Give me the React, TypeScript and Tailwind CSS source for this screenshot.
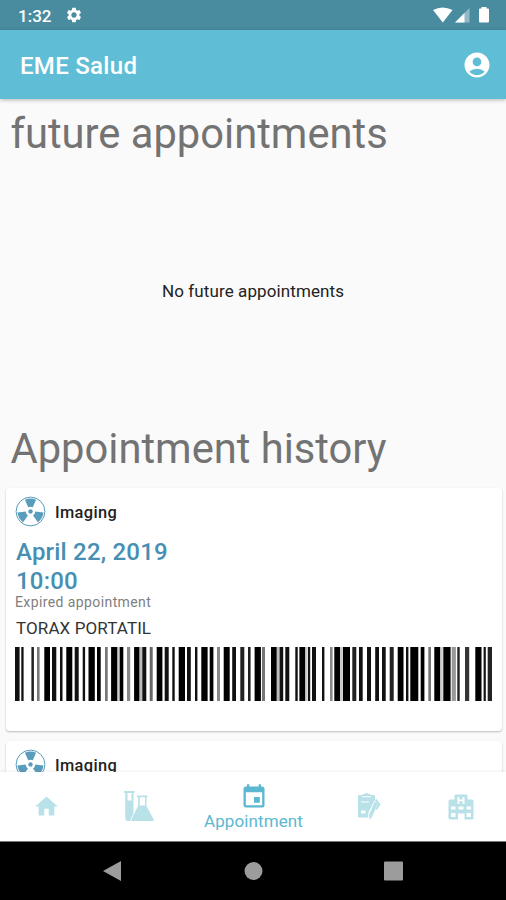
import type { ReactNode } from "react";
import { MdAccountCircle, MdEvent, MdHome, MdSettings } from "react-icons/md";

// Bars as [start, width, shade], in pixels from the left edge of the code.
const BARS: [number, number, string][] = [
  [0, 4.6, "#111"], [6.3, 2.3, "#111"], [16.4, 2.5, "#222"], [22, 2.6, "#777"],
  [29.3, 5.7, "#000"], [37, 4.3, "#111"], [45, 2.5, "#111"], [51.3, 6, "#000"],
  [59.7, 4, "#111"], [67.7, 2.4, "#111"], [73.5, 6.3, "#000"], [82, 3.7, "#000"],
  [90, 2.7, "#777"], [96.1, 6.4, "#000"], [102.5, 2.2, "#ccc"], [104.7, 3.6, "#000"],
  [112, 3.2, "#888"], [119.1, 5.5, "#000"], [124.6, 2.7, "#bbb"], [127.3, 4, "#111"],
  [134.7, 3, "#666"], [141.7, 5.7, "#000"], [149.7, 4, "#111"], [157.3, 2.4, "#111"],
  [163.7, 6.3, "#000"], [172, 3.8, "#111"], [180, 2.4, "#111"], [186.3, 6.3, "#000"],
  [194.7, 3.7, "#000"], [202, 3, "#888"], [208.7, 6, "#000"], [217.2, 3.8, "#111"],
  [225.3, 4, "#222"], [233, 2.6, "#222"], [239.6, 6.3, "#000"], [247, 3, "#777"],
  [256, 5.8, "#000"], [261.8, 2.8, "#bbb"], [264.6, 3.6, "#111"], [270.3, 4, "#111"],
  [280.3, 2.4, "#111"], [284.4, 6, "#000"], [290.4, 2.3, "#ccc"], [293, 2.2, "#111"],
  [297, 4, "#111"], [307, 2.4, "#111"], [315, 2.6, "#888"], [319.3, 5.8, "#000"],
  [325.1, 2.8, "#ccc"], [328, 7, "#000"], [337.3, 4, "#222"], [344, 3.7, "#111"],
  [352, 4, "#111"], [360.2, 3.8, "#111"], [367, 3.7, "#111"], [374.7, 4, "#222"],
  [382.7, 5.8, "#000"], [391, 2.4, "#111"], [395.3, 8, "#000"], [405.7, 3.7, "#000"],
  [413.3, 2.7, "#777"], [419.3, 6, "#000"], [425.5, 2.3, "#ccc"], [428.3, 7.3, "#000"],
  [436.7, 4.2, "#999"], [442.3, 2.4, "#222"], [450, 4.2, "#333"], [460.3, 6.2, "#000"],
  [468.6, 2.2, "#111"], [472.7, 4.3, "#222"],
];

function Barcode() {
  return (
    <svg className="mt-[9px] block h-[54px] w-[478px]" viewBox="0 0 478 54" aria-hidden="true">
      {BARS.map(([x, w, fill]) => (
        <rect key={x} x={x} y="0" width={w} height="54" fill={fill} />
      ))}
    </svg>
  );
}

function RadiationIcon() {
  const blade = "M-5.6 -11.8 Q0 -14.2 5.6 -11.8 L2.3 -4.2 Q0 -5.4 -2.3 -4.2Z";
  return (
    <svg className="block size-[31px] shrink-0 text-[#5a9cbc]" viewBox="-15.5 -15.5 31 31" fill="currentColor">
      <circle r="14.4" fill="none" stroke="currentColor" strokeWidth="1" />
      <circle r="2.2" />
      <path d={blade} />
      <path d={blade} transform="rotate(120)" />
      <path d={blade} transform="rotate(240)" />
    </svg>
  );
}

function LabIcon() {
  return (
    <svg className="block h-[31px] w-[30px]" viewBox="0 0 30 31" fill="currentColor">
      <path fillRule="evenodd" d="M0 0H10.500V2H9.500V22L6 30H4Q1.200 30 1.200 27V2H0ZM3.500 2V9.500H7.500V2Z" />
      <path fillRule="evenodd" d="M13 4.500H23.500V6.300H22.500V15L29.500 28Q30 30 28.500 30H7L8.500 26L14 15V6.300H13ZM15.700 6.300V14.500H21V6.300Z" />
    </svg>
  );
}

function NotesIcon() {
  return (
    <svg className="block h-[29px] w-[24px]" viewBox="0 0 24 29" fill="currentColor">
      <path fillRule="evenodd" d="M1.500 3H5.500V2H8Q9.500 -.5 11 2H13.500V3H17Q18 3 18 4.500V8L11.500 20V25.500H2.500Q1 25.500 1 24.500V4.500Q1 3 1.500 3ZM5 4.200V5.200H14V4.200ZM4 9.500V10.500H12V9.500ZM4 18.500V21.500H8.500V18.500Z" />
      <path d="M17.500 9L21.200 11.200L15.500 24.500L12.500 28.500L11.800 23Z" stroke="white" strokeWidth=".6" />
      <path d="M19.200 6.800L23.700 12.500L19.700 18L18.500 17L20.800 12L18 8.500Z" />
    </svg>
  );
}

function HospitalIcon() {
  return (
    <svg className="block h-[26px] w-[26px]" viewBox="0 0 26 26" fill="currentColor">
      <path fillRule="evenodd" d="M6.500 1.500Q6.500 .5 7.500 .5H18.500Q19.500 .5 19.500 1.500V5.500H24Q25.500 5.500 25.500 7V24Q25.500 25.500 24 25.500H16.500V19.500H10V25.500H2Q.5 25.500 .5 24V7Q.5 5.500 2 5.500H6.500ZM9.500 3V10H11.300V7.300H14.700V10H16.500V3H14.700V5.500H11.300V3ZM3 12.500V15.500H7.500V12.500ZM10.500 12.500V15.500H15.500V12.500ZM18.500 12.500V15.500H23V12.500ZM3 19V23H7.500V19ZM18.500 19V23H23V19Z" />
    </svg>
  );
}

function CardHeader() {
  return (
    <div className="flex h-[32px] items-center gap-[9px]">
      <RadiationIcon />
      <span className="pt-[4px] text-[16.4px] font-medium leading-[20px] tracking-[0.35px] text-[#222]">Imaging</span>
    </div>
  );
}

function NavItem({ children, className }: { children: ReactNode; className: string }) {
  return <div className={`flex h-full items-center justify-center text-[#b9e1e8] ${className}`}>{children}</div>;
}

export default function App() {
  return (
    <div className="flex h-[900px] w-[506px] flex-col overflow-hidden bg-[#fafafa] font-['Roboto',sans-serif]">
      <div className="flex h-[30px] shrink-0 items-center bg-[#498c9f] pl-[18px] pr-[16px] text-white">
        <span className="w-[47px] pt-[2px] text-[17px] font-medium leading-none">1:32</span>
        <MdSettings className="size-[18px]" />
        <svg className="ml-auto h-[16px] w-[57px]" viewBox="0 0 57 16" fill="white">
          <path d="M0 3Q9.500 -2 19.500 3L9.800 15.500Z" />
          <path d="M22 15.500L36.500 1V15.500Z" opacity=".4" />
          <path d="M22 15.500L31.500 6V15.500Z" />
          <path d="M48.500 0H53.500V1.500H55Q56 1.500 56 2.500V14.500Q56 15.500 55 15.500H47Q46 15.500 46 14.500V2.500Q46 1.500 47 1.500H48.500Z" />
        </svg>
      </div>

      <header className="relative z-10 flex h-[69px] shrink-0 items-center justify-between bg-[#5fbed6] pl-[20px] pr-[14px] text-white shadow-[0_1px_4px_rgba(0,0,0,0.28)]">
        <h1 className="pt-[2px] text-[24px] font-medium leading-none tracking-[0.3px]">EME Salud</h1>
        <MdAccountCircle className="size-[30px]" />
      </header>

      <main className="flex min-h-0 flex-1 flex-col overflow-hidden">
        <h2 className="h-[70px] shrink-0 pl-[10.500px] pt-[10px] text-[41.700px] leading-[50px] text-[#737373]">future appointments</h2>
        <p className="flex h-[245px] shrink-0 items-center justify-center text-[17px] tracking-[0.1px] text-[#222]">No future appointments</p>
        <h2 className="h-[74px] shrink-0 pl-[10.500px] pt-[10px] text-[41.700px] leading-[50px] text-[#737373]">Appointment history</h2>

        <article className="ml-[6px] mr-[4px] h-[243px] shrink-0 rounded-[4px] bg-white px-[9px] pt-[7px] shadow-[0_1px_2px_rgba(0,0,0,0.25)]">
          <CardHeader />
          <div className="mt-[11px] pl-[1px] text-[24px] font-medium leading-[29px] tracking-[0.2px] text-[#468fb3]">
            <p>April 22, 2019</p>
            <p>10:00</p>
          </div>
          <p className="-mt-[2px] text-[14px] leading-[16px] tracking-[0.4px] text-[#808080]">Expired appointment</p>
          <p className="mt-[8px] pl-[1px] text-[17px] leading-[20px] tracking-[0.1px] text-[#333]">TORAX PORTATIL</p>
          <Barcode />
        </article>

        <article className="ml-[6px] mr-[4px] mt-[10px] h-[243px] shrink-0 rounded-[4px] bg-white px-[9px] pt-[7px] shadow-[0_1px_2px_rgba(0,0,0,0.25)]">
          <CardHeader />
        </article>
      </main>

      <nav className="z-10 flex h-[69px] shrink-0 bg-white shadow-[0_-1px_3px_rgba(0,0,0,0.06)]">
        <NavItem className="w-[92px]"><MdHome className="size-[27px]" /></NavItem>
        <NavItem className="w-[93px]"><LabIcon /></NavItem>
        <div className="flex w-[137px] flex-col items-center pt-[11px] text-[#5bb8d0]">
          <MdEvent className="size-[28px]" />
          <span className="text-[17px] leading-[20px] tracking-[0.1px]">Appointment</span>
        </div>
        <NavItem className="w-[93px]"><NotesIcon /></NavItem>
        <NavItem className="w-[91px]"><HospitalIcon /></NavItem>
      </nav>

      <div className="flex h-[59px] shrink-0 items-center justify-center border-t border-[#777] bg-black">
        <svg className="h-[22px] w-[300px]" viewBox="0 0 300 22" fill="#9c9c9c">
          <path d="M0 11L18 1V21Z" />
          <circle cx="150.500" cy="11" r="9" />
          <rect x="281" y="1.500" width="19" height="19" rx="1" />
        </svg>
      </div>
    </div>
  );
}
